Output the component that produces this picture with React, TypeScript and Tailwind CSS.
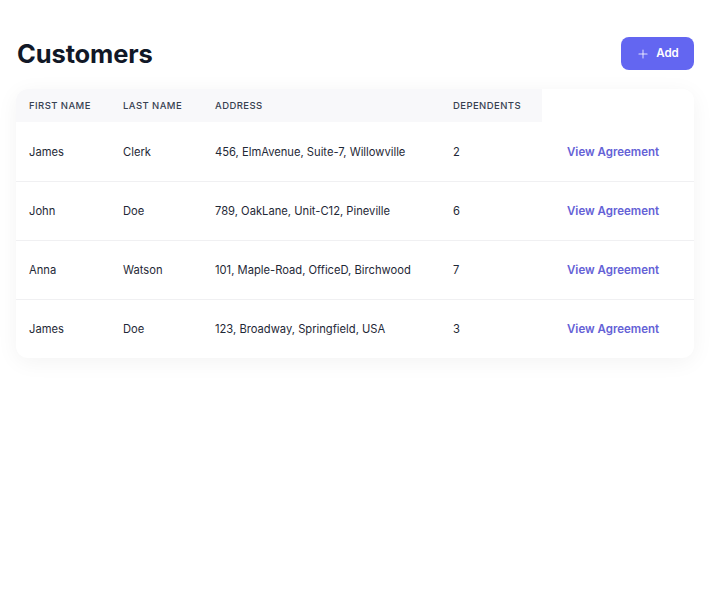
import { Plus } from "lucide-react";

const rows = [
  { first: "James", last: "Clerk", address: "456, ElmAvenue, Suite-7, Willowville", deps: 2 },
  { first: "John", last: "Doe", address: "789, OakLane, Unit-C12, Pineville", deps: 6 },
  { first: "Anna", last: "Watson", address: "101, Maple-Road, OfficeD, Birchwood", deps: 7 },
  { first: "James", last: "Doe", address: "123, Broadway, Springfield, USA", deps: 3 },
];

const thClass =
  "h-[33px] bg-[#f8f8fa] px-[13px] pt-[2px] text-left align-middle text-[9.5px] font-medium uppercase tracking-[0.045em] text-[#374151]";
const tdClass = "h-[59px] px-[13px] pt-[2px] align-middle text-[11.2px] leading-none text-[#1f2937]";

export default function App() {
  return (
    <div
      className="min-h-screen bg-white px-4 pt-[37px]"
      style={{ fontFamily: "Inter, 'Noto Sans', sans-serif" }}
    >
      <div className="flex h-[33px] items-center justify-between">
        <h1 className="pl-px text-[25.5px] font-bold leading-none tracking-[-0.005em] text-[#111827]">
          Customers
        </h1>
        <button className="flex h-[33px] w-[73px] items-center justify-center gap-[6px] rounded-lg bg-[#6366f1] text-[11.5px] font-semibold text-white">
          <Plus className="h-[14px] w-[14px] text-white/80" strokeWidth={1.75} />
          Add
        </button>
      </div>

      <div className="mt-[19px] overflow-hidden rounded-xl bg-white shadow-[0_4px_22px_rgba(0,0,0,0.05)]">
        <table className="w-full table-fixed border-collapse">
          <colgroup>
            <col className="w-[94px]" />
            <col className="w-[92px]" />
            <col className="w-[238px]" />
            <col className="w-[102px]" />
            <col />
          </colgroup>
          <thead>
            <tr>
              <th className={thClass}>First Name</th>
              <th className={thClass}>Last Name</th>
              <th className={thClass}>Address</th>
              <th className={thClass}>Dependents</th>
              <th className="bg-white" />
            </tr>
          </thead>
          <tbody>
            {rows.map((r, i) => (
              <tr key={i} className={i < rows.length - 1 ? "border-b border-[#f0f0f2]" : ""}>
                <td className={tdClass}>{r.first}</td>
                <td className={tdClass}>{r.last}</td>
                <td className={tdClass}>{r.address}</td>
                <td className={tdClass}>{r.deps}</td>
                <td className="h-[59px] pl-[25px] pt-[2px] align-middle text-[11.5px] leading-none">
                  <a className="font-semibold text-[#6461d6]" href="#">
                    View Agreement
                  </a>
                </td>
              </tr>
            ))}
          </tbody>
        </table>
      </div>
    </div>
  );
}
